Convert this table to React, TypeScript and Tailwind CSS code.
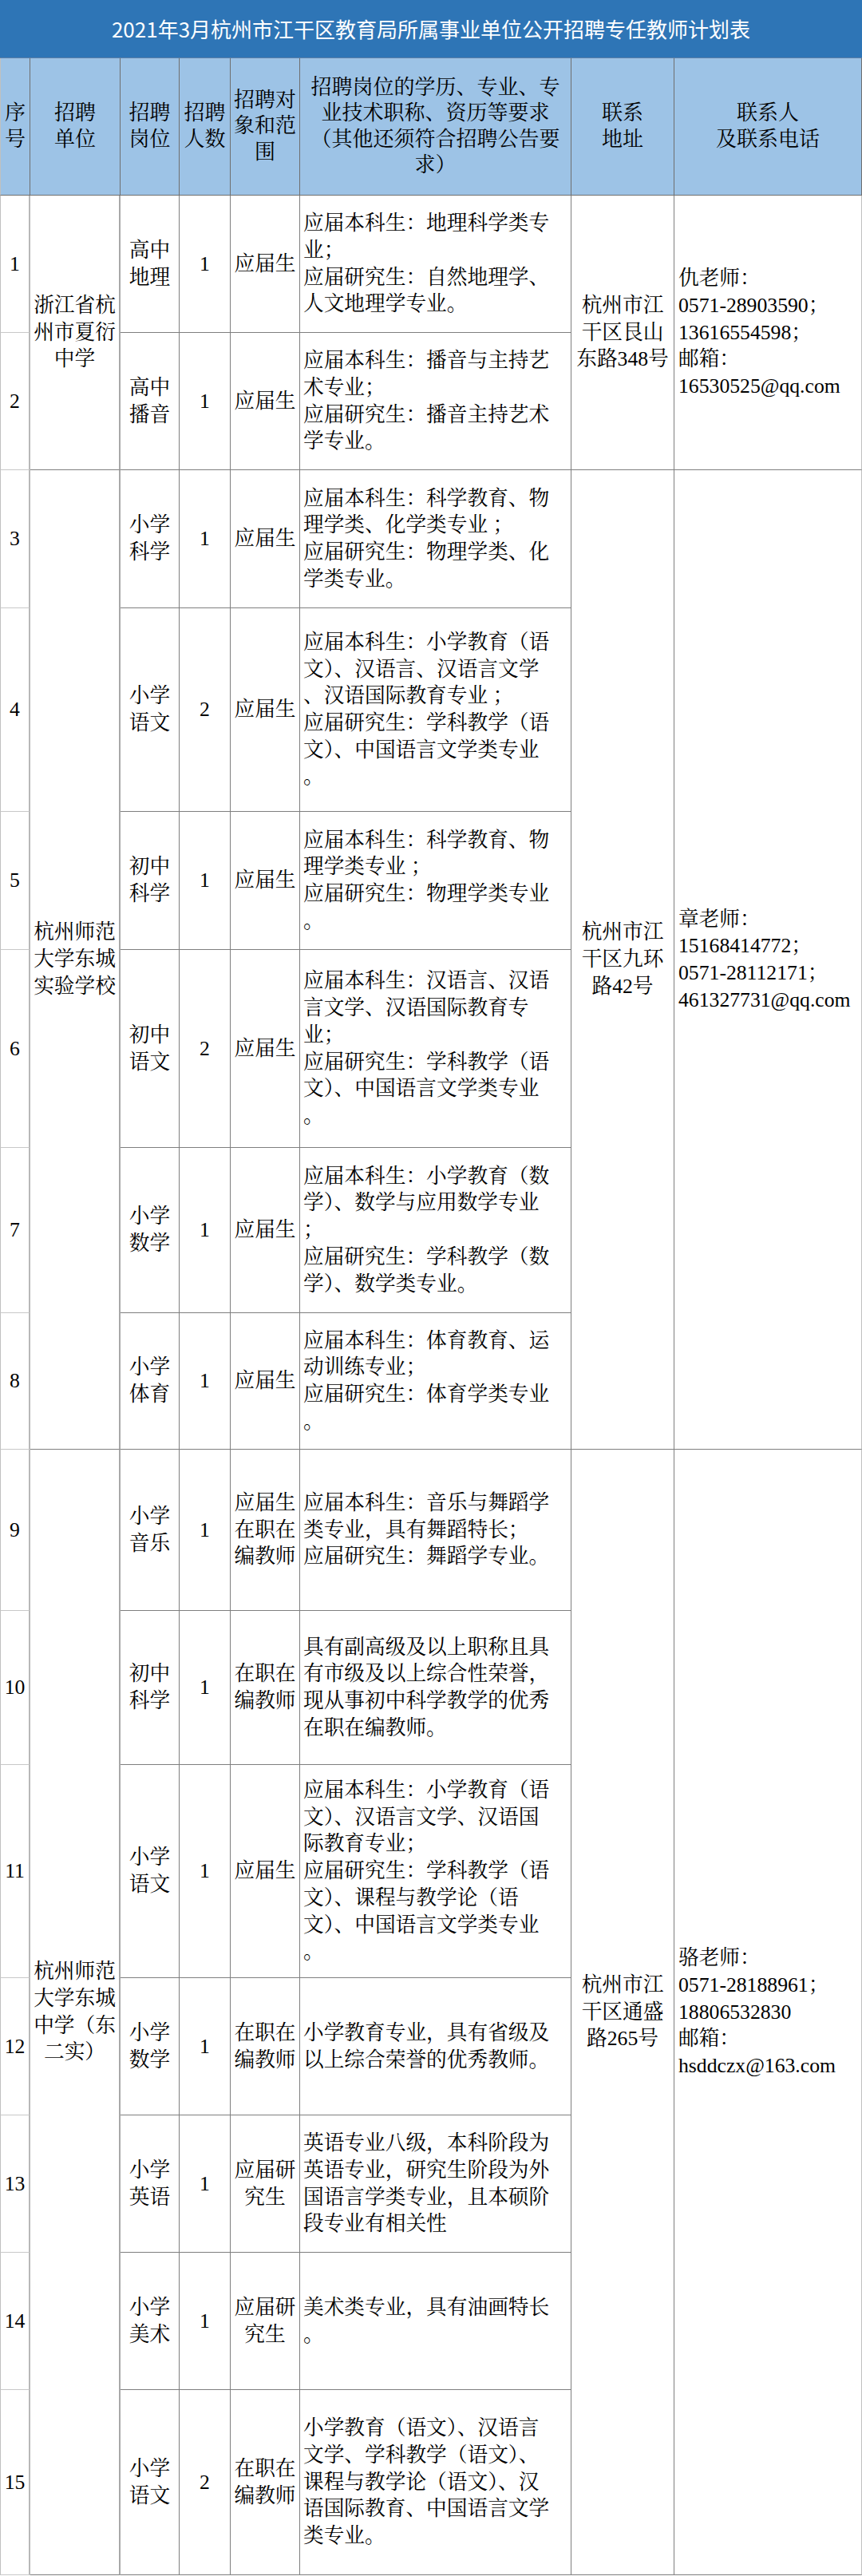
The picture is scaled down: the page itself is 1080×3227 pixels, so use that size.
import React from "react";

type Row = {
  n: number;
  post: string[];
  count: number;
  target: string[];
  desc: string[];
};

type Group = {
  span: string;
  school: string[];
  address: string[];
  contact: string[];
  rows: Row[];
};

const groups: Group[] = [
  {
    span: "row-span-2",
    school: ["浙江省杭", "州市夏衍", "中学"],
    address: ["杭州市江", "干区艮山", "东路348号"],
    contact: ["仇老师：", "0571-28903590；", "13616554598；", "邮箱：", "16530525@qq.com"],
    rows: [
      {
        n: 1,
        post: ["高中", "地理"],
        count: 1,
        target: ["应届生"],
        desc: ["应届本科生：地理科学类专", "业；", "应届研究生：自然地理学、", "人文地理学专业。"],
      },
      {
        n: 2,
        post: ["高中", "播音"],
        count: 1,
        target: ["应届生"],
        desc: ["应届本科生：播音与主持艺", "术专业；", "应届研究生：播音主持艺术", "学专业。"],
      },
    ],
  },
  {
    span: "row-span-6",
    school: ["杭州师范", "大学东城", "实验学校"],
    address: ["杭州市江", "干区九环", "路42号"],
    contact: ["章老师：", "15168414772；", "0571-28112171；", "461327731@qq.com"],
    rows: [
      {
        n: 3,
        post: ["小学", "科学"],
        count: 1,
        target: ["应届生"],
        desc: ["应届本科生：科学教育、物", "理学类、化学类专业 ；", "应届研究生：物理学类、化", "学类专业。"],
      },
      {
        n: 4,
        post: ["小学", "语文"],
        count: 2,
        target: ["应届生"],
        desc: [
          "应届本科生：小学教育（语",
          "文）、汉语言、汉语言文学",
          "、汉语国际教育专业 ；",
          "应届研究生：学科教学（语",
          "文）、中国语言文学类专业",
          "。",
        ],
      },
      {
        n: 5,
        post: ["初中", "科学"],
        count: 1,
        target: ["应届生"],
        desc: ["应届本科生：科学教育、物", "理学类专业 ；", "应届研究生：物理学类专业", "。"],
      },
      {
        n: 6,
        post: ["初中", "语文"],
        count: 2,
        target: ["应届生"],
        desc: [
          "应届本科生：汉语言、汉语",
          "言文学、汉语国际教育专",
          "业；",
          "应届研究生：学科教学（语",
          "文）、中国语言文学类专业",
          "。",
        ],
      },
      {
        n: 7,
        post: ["小学", "数学"],
        count: 1,
        target: ["应届生"],
        desc: [
          "应届本科生：小学教育（数",
          "学）、数学与应用数学专业",
          "；",
          "应届研究生：学科教学（数",
          "学）、数学类专业。",
        ],
      },
      {
        n: 8,
        post: ["小学", "体育"],
        count: 1,
        target: ["应届生"],
        desc: ["应届本科生：体育教育、运", "动训练专业；", "应届研究生：体育学类专业", "。"],
      },
    ],
  },
  {
    span: "row-span-7",
    school: ["杭州师范", "大学东城", "中学（东", "二实）"],
    address: ["杭州市江", "干区通盛", "路265号"],
    contact: ["骆老师：", "0571-28188961；", "18806532830", "邮箱：", "hsddczx@163.com"],
    rows: [
      {
        n: 9,
        post: ["小学", "音乐"],
        count: 1,
        target: ["应届生", "在职在", "编教师"],
        desc: ["应届本科生：音乐与舞蹈学", "类专业，具有舞蹈特长；", "应届研究生：舞蹈学专业。"],
      },
      {
        n: 10,
        post: ["初中", "科学"],
        count: 1,
        target: ["在职在", "编教师"],
        desc: ["具有副高级及以上职称且具", "有市级及以上综合性荣誉，", "现从事初中科学教学的优秀", "在职在编教师。"],
      },
      {
        n: 11,
        post: ["小学", "语文"],
        count: 1,
        target: ["应届生"],
        desc: [
          "应届本科生：小学教育（语",
          "文）、汉语言文学、汉语国",
          "际教育专业；",
          "应届研究生：学科教学（语",
          "文）、课程与教学论（语",
          "文）、中国语言文学类专业",
          "。",
        ],
      },
      {
        n: 12,
        post: ["小学", "数学"],
        count: 1,
        target: ["在职在", "编教师"],
        desc: ["小学教育专业，具有省级及", "以上综合荣誉的优秀教师。"],
      },
      {
        n: 13,
        post: ["小学", "英语"],
        count: 1,
        target: ["应届研", "究生"],
        desc: ["英语专业八级，本科阶段为", "英语专业，研究生阶段为外", "国语言学类专业，且本硕阶", "段专业有相关性"],
      },
      {
        n: 14,
        post: ["小学", "美术"],
        count: 1,
        target: ["应届研", "究生"],
        desc: ["美术类专业，具有油画特长", "。"],
      },
      {
        n: 15,
        post: ["小学", "语文"],
        count: 2,
        target: ["在职在", "编教师"],
        desc: [
          "小学教育（语文）、汉语言",
          "文学、学科教学（语文）、",
          "课程与教学论（语文）、汉",
          "语国际教育、中国语言文学",
          "类专业。",
        ],
      },
    ],
  },
];

const cell = "border-r border-b border-[#7f7f7f] flex items-center justify-center text-center";

function Lines({ lines }: { lines: string[] }) {
  return (
    <div>
      {lines.map((l, i) => (
        <div key={i} className="whitespace-pre">
          {l}
        </div>
      ))}
    </div>
  );
}

export default function App() {
  const cells: React.ReactNode[] = [];
  groups.forEach((g, gi) => {
    g.rows.forEach((r, ri) => {
      cells.push(
        <div
          key={`n${r.n}`}
          className="border-l border-l-[#c0c0c0] border-r-2 border-r-[#b8b8b8] border-b border-b-[#c8c8c8] flex items-center justify-center"
        >
          {r.n}
        </div>
      );
      if (ri === 0) {
        cells.push(
          <div
            key={`s${gi}`}
            className={`${g.span} border-r-2 border-r-[#a8a8a8] border-b border-b-[#7f7f7f] flex items-center justify-center text-center`}
          >
            <Lines lines={g.school} />
          </div>
        );
      }
      cells.push(
        <div key={`p${r.n}`} className={cell}>
          <Lines lines={r.post} />
        </div>
      );
      cells.push(
        <div key={`c${r.n}`} className={cell}>
          {r.count}
        </div>
      );
      cells.push(
        <div key={`t${r.n}`} className={cell}>
          <Lines lines={r.target} />
        </div>
      );
      cells.push(
        <div key={`d${r.n}`} className="border-r border-b border-[#7f7f7f] flex items-center pl-[4px]">
          <Lines lines={r.desc} />
        </div>
      );
      if (ri === 0) {
        cells.push(
          <div key={`a${gi}`} className={`${g.span} ${cell}`}>
            <Lines lines={g.address} />
          </div>
        );
        cells.push(
          <div
            key={`k${gi}`}
            className={`${g.span} border-r border-r-[#c0c0c0] border-b border-b-[#7f7f7f] flex items-center pl-[5px]`}
          >
            <Lines lines={g.contact} />
          </div>
        );
      }
    });
  });

  const head = "bg-[#9dc3e6] border-r border-b border-[#6f6f6f] flex items-center justify-center text-center";

  return (
    <div className="w-[1080px] h-[3227px] bg-white text-black">
      <div className="grid grid-cols-[38px_113px_74px_64px_87px_340px_129px_235px] grid-rows-[73px_172px_172px_172px_173px_255px_173px_248px_207px_171px_202px_193px_267px_172px_172px_172px_232px] [font-family:'Liberation_Serif','Noto_Serif_CJK_SC','Noto_Sans_CJK_SC',serif] text-[25.7px] leading-[33.7px]">
        <div className="col-span-8 bg-[#2e75b6] text-white flex items-center justify-center text-[26px] leading-[32px] [font-family:'Noto_Sans_CJK_SC',sans-serif] border-b border-[#5b7fa6]">
          2021年3月杭州市江干区教育局所属事业单位公开招聘专任教师计划表
        </div>
        <div className={`${head} text-[26px] leading-[32.5px] border-l border-l-[#c0c0c0]`}>
          <Lines lines={["序", "号"]} />
        </div>
        <div className={`${head} text-[26px] leading-[32.5px]`}>
          <Lines lines={["招聘", "单位"]} />
        </div>
        <div className={`${head} text-[26px] leading-[32.5px]`}>
          <Lines lines={["招聘", "岗位"]} />
        </div>
        <div className={`${head} text-[26px] leading-[32.5px]`}>
          <Lines lines={["招聘", "人数"]} />
        </div>
        <div className={`${head} text-[26px] leading-[32.5px]`}>
          <Lines lines={["招聘对", "象和范", "围"]} />
        </div>
        <div className={`${head} text-[26px] leading-[32.5px]`}>
          <Lines lines={["招聘岗位的学历、专业、专", "业技术职称、资历等要求", "（其他还须符合招聘公告要", "求）"]} />
        </div>
        <div className={`${head} text-[26px] leading-[32.5px]`}>
          <Lines lines={["联系", "地址"]} />
        </div>
        <div className={`${head} text-[26px] leading-[32.5px]`}>
          <Lines lines={["联系人", "及联系电话"]} />
        </div>
        {cells}
      </div>
    </div>
  );
}
